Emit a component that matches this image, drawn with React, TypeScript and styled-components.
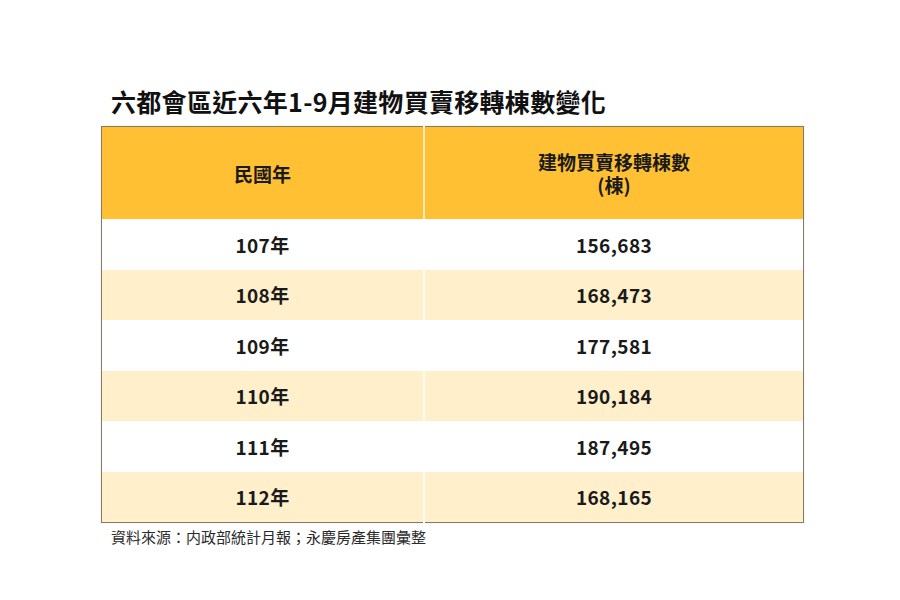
import React from "react";
import styled, { createGlobalStyle } from "styled-components";

const Global = createGlobalStyle`
  html, body { margin: 0; padding: 0; background: #ffffff; }
  body { font-family: "Noto Sans CJK TC", "Noto Sans", sans-serif; color: #1c1c1c; }
`;

const Page = styled.div`
  width: 900px;
  height: 600px;
  box-sizing: border-box;
  padding: 85px 0 0 101px;
  display: flex;
  flex-direction: column;
`;

const Title = styled.h1`
  margin: 0 0 8px 10px;
  font-size: 25px;
  line-height: 33px;
  font-weight: 700;
  color: #111;
  letter-spacing: 0.3px;
`;

const Table = styled.table`
  width: 703px;
  border-collapse: collapse;
  border: 1px solid #857a62;
  box-shadow: 0 0 1px rgba(0,0,0,0.2);
`;

const HeadCell = styled.th<{ $w: number }>`
  width: ${(p) => p.$w}px;
  height: 92px;
  padding: 0;
  background: #ffc033;
  font-size: 19px;
  font-weight: 700;
  color: #1a1a1a;
  text-align: center;
  vertical-align: middle;
  & + & { border-left: 2px solid rgba(255, 245, 220, 0.8); }
`;

const HeadLine = styled.span`
  display: block;
  line-height: 23px;
`;

const Row = styled.tr<{ $alt: boolean }>`
  height: 50.5px;
  background: ${(p) => (p.$alt ? "#fff0cb" : "#ffffff")};
`;

const Cell = styled.td`
  padding: 0;
  font-size: 19px;
  font-weight: 700;
  color: #1a1a1a;
  text-align: center;
  vertical-align: middle;
  letter-spacing: 0.4px;
  & + & { border-left: 2px solid rgba(255, 255, 255, 0.75); }
`;

const Note = styled.p`
  margin: 4px 0 0 10px;
  font-size: 15px;
  line-height: 20px;
  color: #2a2a2a;
`;

const rows: [string, string][] = [
  ["107年", "156,683"],
  ["108年", "168,473"],
  ["109年", "177,581"],
  ["110年", "190,184"],
  ["111年", "187,495"],
  ["112年", "168,165"],
];

export default function App() {
  return (
    <>
      <Global />
      <Page>
        <Title>六都會區近六年1-9月建物買賣移轉棟數變化</Title>
        <Table>
          <thead>
            <tr>
              <HeadCell $w={322}>
                <HeadLine>民國年</HeadLine>
              </HeadCell>
              <HeadCell $w={379}>
                <HeadLine>建物買賣移轉棟數</HeadLine>
                <HeadLine>(棟)</HeadLine>
              </HeadCell>
            </tr>
          </thead>
          <tbody>
            {rows.map(([y, n], i) => (
              <Row key={y} $alt={i % 2 === 1}>
                <Cell>{y}</Cell>
                <Cell>{n}</Cell>
              </Row>
            ))}
          </tbody>
        </Table>
        <Note>資料來源：内政部統計月報；永慶房產集團彙整</Note>
      </Page>
    </>
  );
}
